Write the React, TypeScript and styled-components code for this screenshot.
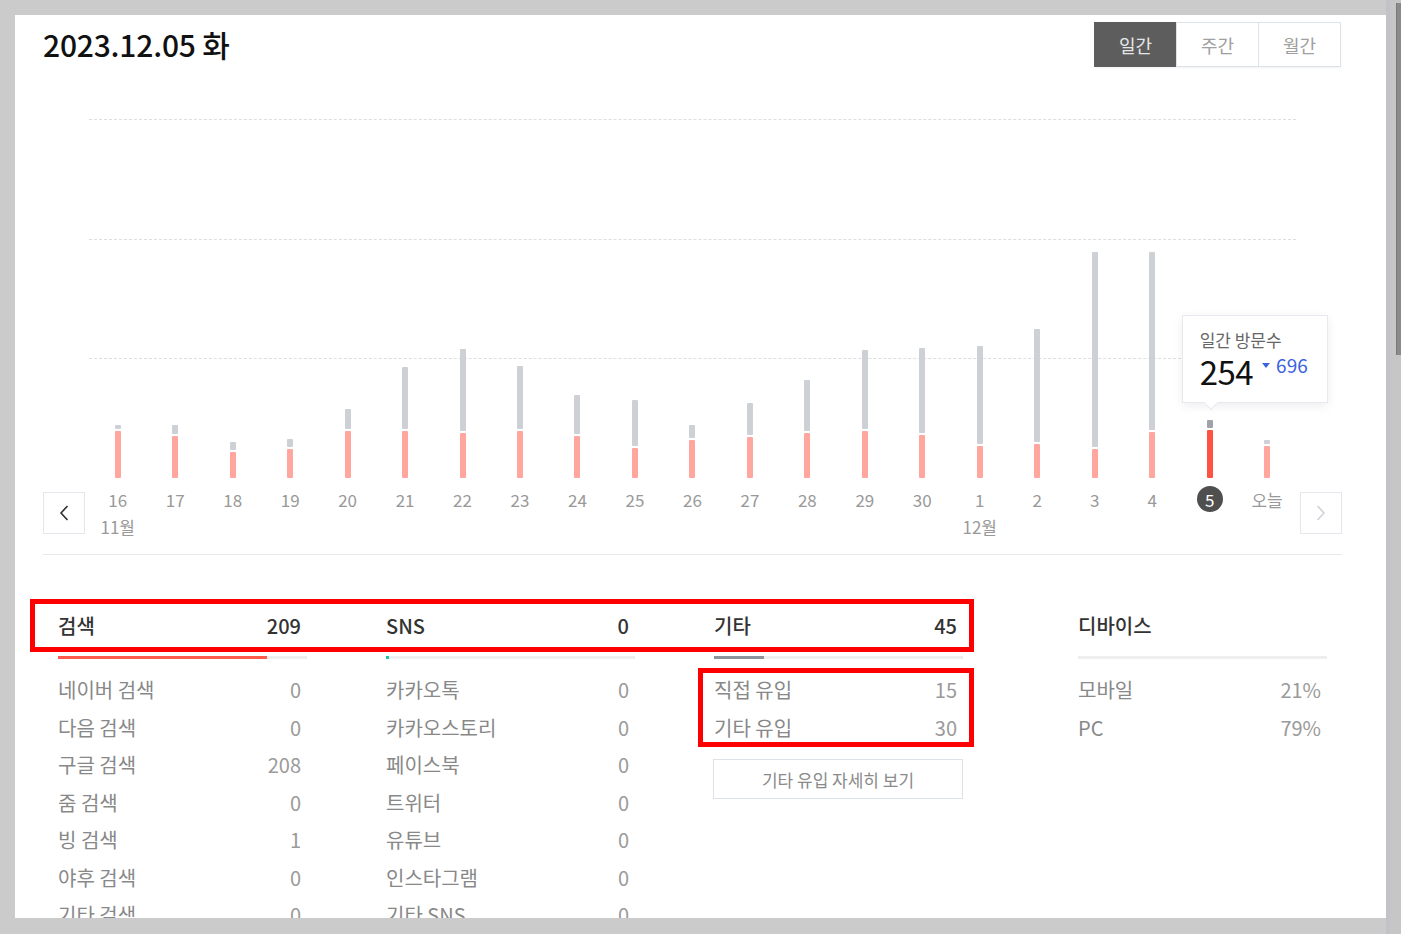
import React from "react";
import styled, { createGlobalStyle } from "styled-components";

const Global = createGlobalStyle`
  html, body {
    margin: 0;
    padding: 0;
    background: #cbcbcb;
  }
  body {
    font-family: "Noto Sans CJK KR", "Noto Sans", sans-serif;
  }
  * {
    box-sizing: border-box;
  }
`;

type Day = { label: string; total: number; red: number; month?: string; active?: boolean };

// heights measured from the chart baseline
const days: Day[] = [
  { label: "16", total: 53, red: 47, month: "11월" },
  { label: "17", total: 53, red: 42 },
  { label: "18", total: 36, red: 26 },
  { label: "19", total: 39, red: 29 },
  { label: "20", total: 69, red: 47 },
  { label: "21", total: 111, red: 47 },
  { label: "22", total: 129, red: 45 },
  { label: "23", total: 112, red: 47 },
  { label: "24", total: 83, red: 42 },
  { label: "25", total: 78, red: 30 },
  { label: "26", total: 53, red: 38 },
  { label: "27", total: 75, red: 41 },
  { label: "28", total: 98, red: 45 },
  { label: "29", total: 128, red: 47 },
  { label: "30", total: 130, red: 43 },
  { label: "1", total: 132, red: 32, month: "12월" },
  { label: "2", total: 149, red: 34 },
  { label: "3", total: 226, red: 29 },
  { label: "4", total: 226, red: 46 },
  { label: "5", total: 58, red: 48, active: true },
  { label: "오늘", total: 38, red: 32 },
];

const searchRows = [
  ["네이버 검색", "0"],
  ["다음 검색", "0"],
  ["구글 검색", "208"],
  ["줌 검색", "0"],
  ["빙 검색", "1"],
  ["야후 검색", "0"],
  ["기타 검색", "0"],
];

const snsRows = [
  ["카카오톡", "0"],
  ["카카오스토리", "0"],
  ["페이스북", "0"],
  ["트위터", "0"],
  ["유튜브", "0"],
  ["인스타그램", "0"],
  ["기타 SNS", "0"],
];

const etcRows = [
  ["직접 유입", "15"],
  ["기타 유입", "30"],
];

const deviceRows = [
  ["모바일", "21%"],
  ["PC", "79%"],
];

const Screen = styled.div`
  display: flex;
  width: 1401px;
  height: 934px;
  overflow: hidden;
`;

const Viewport = styled.div`
  padding: 15px 0 0 15px;
`;

const Panel = styled.div`
  width: 1371px;
  height: 903px;
  background: #fff;
  overflow: hidden;
  padding: 7px 44px 0 28px;
`;

const ScrollTrack = styled.div`
  width: 15px;
  height: 934px;
  display: flex;
  justify-content: flex-end;
  padding-top: 3px;
  background: #c6c6c6;
  border-left: 4px solid #c1c3c6;
`;

const Thumb = styled.div`
  width: 5px;
  height: 352px;
  background: #8a8a8a;
  border-left: 1px solid #7a7a7a;
`;

const TopBar = styled.div`
  display: flex;
  align-items: center;
  justify-content: space-between;
  height: 45px;
`;

const Title = styled.h1`
  margin: 0;
  font-size: 30px;
  font-weight: 500;
  color: #111;
  letter-spacing: -0.2px;
  padding-bottom: 2px;
`;

const Tabs = styled.div`
  display: flex;
  margin-right: 1px;
  box-shadow: 0 1px 2px rgba(0, 0, 0, 0.06);
`;

const Tab = styled.button<{ $active?: boolean }>`
  width: 83px;
  height: 45px;
  margin-left: -1px;
  border: 1px solid ${({ $active }) => ($active ? "#5d5d5d" : "#dde3ea")};
  background: ${({ $active }) => ($active ? "#5d5d5d" : "#fff")};
  color: ${({ $active }) => ($active ? "#e6e6e6" : "#a0a0a0")};
  font-family: inherit;
  font-size: 18px;
  padding: 0;
`;

const ChartSection = styled.section`
  margin-top: 52px;
  border-bottom: 1px solid #e9e9e9;
  padding-bottom: 15px;
`;

const Plot = styled.div`
  display: grid;
  height: 359px;
  margin: 0 46px;
`;

const GridLayer = styled.div`
  grid-area: 1 / 1;
  display: flex;
  flex-direction: column;
`;

const GridLine = styled.div`
  height: 119.5px;
  border-top: 1px dashed #dedede;
`;

const BarLayer = styled.div`
  grid-area: 1 / 1;
  display: flex;
`;

const BarCol = styled.div`
  flex: 1;
  display: flex;
  justify-content: center;
  align-items: flex-end;
`;

const BarStack = styled.div`
  position: relative;
  width: 6px;
  display: flex;
  flex-direction: column;
  gap: 2px;
`;

const Seg = styled.div<{ $tone: "gray" | "red"; $active?: boolean }>`
  border-radius: 1px;
  background: ${({ $tone, $active }) =>
    $tone === "gray" ? ($active ? "#9ea3a9" : "#cdd1d6") : $active ? "#ff5242" : "#ffa69e"};
`;

const Tooltip = styled.div`
  position: absolute;
  left: -25px;
  bottom: calc(100% + 17px);
  width: 146px;
  height: 88px;
  background: #fff;
  border: 1px solid #e6e9ef;
  box-shadow: 0 3px 10px rgba(0, 0, 0, 0.07);
  padding: 13px 0 0 17px;
  z-index: 2;
`;

const TipArrow = styled.div`
  position: absolute;
  left: 23px;
  bottom: -6px;
  width: 10px;
  height: 10px;
  background: #fff;
  border-right: 1px solid #e6e9ef;
  border-bottom: 1px solid #e6e9ef;
  transform: rotate(45deg);
`;

const TipLabel = styled.div`
  font-size: 17px;
  line-height: 22px;
  color: #666;
`;

const TipValue = styled.div`
  display: flex;
  align-items: center;
  margin-top: 2px;
  height: 36px;
`;

const BigNum = styled.span`
  font-size: 33px;
  line-height: 36px;
  color: #111;
  letter-spacing: -0.5px;
`;

const Delta = styled.span`
  display: flex;
  align-items: center;
  gap: 6px;
  margin-left: 9px;
  margin-top: -12px;
  font-size: 19px;
  line-height: 22px;
  color: #3d62e0;
`;

const AxisRow = styled.div`
  display: flex;
  gap: 4px;
  margin-top: 7px;
`;

const NavButton = styled.button<{ $dim?: boolean }>`
  width: 42px;
  height: 42px;
  margin-top: 7px;
  padding: 0;
  display: flex;
  align-items: center;
  justify-content: center;
  background: #fff;
  border: 1px solid #e4e7eb;
  color: ${({ $dim }) => ($dim ? "#cfd3d8" : "#333")};
`;

const Labels = styled.div`
  flex: 1;
  display: flex;
`;

const LabelCol = styled.div`
  flex: 1;
  display: flex;
  flex-direction: column;
  align-items: center;
`;

const DayLabel = styled.div<{ $active?: boolean }>`
  height: 28px;
  display: flex;
  align-items: center;
  justify-content: center;
  font-size: 17px;
  color: #999;
  ${({ $active }) =>
    $active &&
    `
    width: 26px;
    height: 26px;
    margin: 1px 0;
    border-radius: 50%;
    background: #4f4f4f;
    color: #fff;
  `}
`;

const MonthLabel = styled.div`
  height: 24px;
  margin-top: 2px;
  line-height: 24px;
  font-size: 17px;
  color: #999;
`;

const Stats = styled.section`
  position: relative;
  display: flex;
  gap: 79px;
  padding: 57px 0 0 15px;
`;

const Column = styled.div<{ $offset?: number }>`
  width: 249px;
  margin-left: ${({ $offset }) => $offset || 0}px;
`;

const HeadRow = styled.div`
  display: flex;
  justify-content: space-between;
  padding-right: 6px;
  height: 28px;
  line-height: 28px;
  font-size: 20px;
  font-weight: 500;
  color: #333;
`;

const Track = styled.div`
  height: 3px;
  margin: 16px 0 12px;
  background: #eeeeee;
`;

const Fill = styled.div<{ $color: string }>`
  height: 100%;
  background: ${({ $color }) => $color};
`;

const Row = styled.div`
  display: flex;
  justify-content: space-between;
  padding-right: 6px;
  height: 37.5px;
  line-height: 37.5px;
  font-size: 20px;
  color: #888;
`;

const Num = styled.span`
  color: #9a9a9a;
`;

const MoreButton = styled.button`
  width: 250px;
  height: 40px;
  margin: 13px 0 0 -1px;
  background: #fff;
  border: 1px solid #dde2e8;
  color: #8a8a8a;
  font-family: inherit;
  font-size: 17px;
`;

const Mark = styled.div<{ $top: number; $left: number; $w: number; $h: number }>`
  position: absolute;
  top: ${({ $top }) => $top}px;
  left: ${({ $left }) => $left}px;
  width: ${({ $w }) => $w}px;
  height: ${({ $h }) => $h}px;
  border: 5px solid #ff0000;
  pointer-events: none;
`;

const Chevron = ({ dir }: { dir: "left" | "right" }) => (
  <svg width="10" height="16" viewBox="0 0 10 16" fill="none">
    <polyline
      points={dir === "left" ? "8,1.5 2,8 8,14.5" : "2,1.5 8,8 2,14.5"}
      stroke="currentColor"
      strokeWidth="1.7"
      strokeLinecap="round"
      strokeLinejoin="round"
    />
  </svg>
);

const StatColumn = ({
  title,
  total,
  fill,
  color,
  rows,
}: {
  title: string;
  total?: string;
  fill: string;
  color: string;
  rows: string[][];
}) => (
  <>
    <HeadRow>
      <span>{title}</span>
      <span>{total}</span>
    </HeadRow>
    <Track>
      <Fill $color={color} style={{ width: fill }} />
    </Track>
    {rows.map(([name, value]) => (
      <Row key={name}>
        <span>{name}</span>
        <Num>{value}</Num>
      </Row>
    ))}
  </>
);

export default function App() {
  return (
    <>
      <Global />
      <Screen>
        <Viewport>
          <Panel>
            <TopBar>
              <Title>2023.12.05 화</Title>
              <Tabs>
                <Tab $active>일간</Tab>
                <Tab>주간</Tab>
                <Tab>월간</Tab>
              </Tabs>
            </TopBar>

            <ChartSection>
              <Plot>
                <GridLayer>
                  <GridLine />
                  <GridLine />
                  <GridLine />
                </GridLayer>
                <BarLayer>
                  {days.map((d) => (
                    <BarCol key={d.label}>
                      <BarStack>
                        {d.active && (
                          <Tooltip>
                            <TipLabel>일간 방문수</TipLabel>
                            <TipValue>
                              <BigNum>254</BigNum>
                              <Delta>
                                <svg width="8" height="5" viewBox="0 0 8 5">
                                  <polygon points="0,0 8,0 4,5" fill="#3d62e0" />
                                </svg>
                                696
                              </Delta>
                            </TipValue>
                            <TipArrow />
                          </Tooltip>
                        )}
                        <Seg $tone="gray" $active={d.active} style={{ height: d.total - d.red - 2 }} />
                        <Seg $tone="red" $active={d.active} style={{ height: d.red }} />
                      </BarStack>
                    </BarCol>
                  ))}
                </BarLayer>
              </Plot>

              <AxisRow>
                <NavButton>
                  <Chevron dir="left" />
                </NavButton>
                <Labels>
                  {days.map((d) => (
                    <LabelCol key={d.label}>
                      <DayLabel $active={d.active}>{d.label}</DayLabel>
                      {d.month && <MonthLabel>{d.month}</MonthLabel>}
                    </LabelCol>
                  ))}
                </Labels>
                <NavButton $dim>
                  <Chevron dir="right" />
                </NavButton>
              </AxisRow>
            </ChartSection>

            <Stats>
              <Column>
                <StatColumn title="검색" total="209" fill="84%" color="#ff5a4a" rows={searchRows} />
              </Column>
              <Column>
                <StatColumn title="SNS" total="0" fill="3px" color="#1ec2ad" rows={snsRows} />
              </Column>
              <Column>
                <StatColumn title="기타" total="45" fill="20%" color="#8c939b" rows={etcRows} />
                <MoreButton>기타 유입 자세히 보기</MoreButton>
              </Column>
              <Column $offset={36}>
                <StatColumn title="디바이스" fill="0" color="transparent" rows={deviceRows} />
              </Column>

              <Mark $top={44} $left={-13} $w={944} $h={53} />
              <Mark $top={113} $left={655} $w={276} $h={79} />
            </Stats>
          </Panel>
        </Viewport>
        <ScrollTrack>
          <Thumb />
        </ScrollTrack>
      </Screen>
    </>
  );
}
